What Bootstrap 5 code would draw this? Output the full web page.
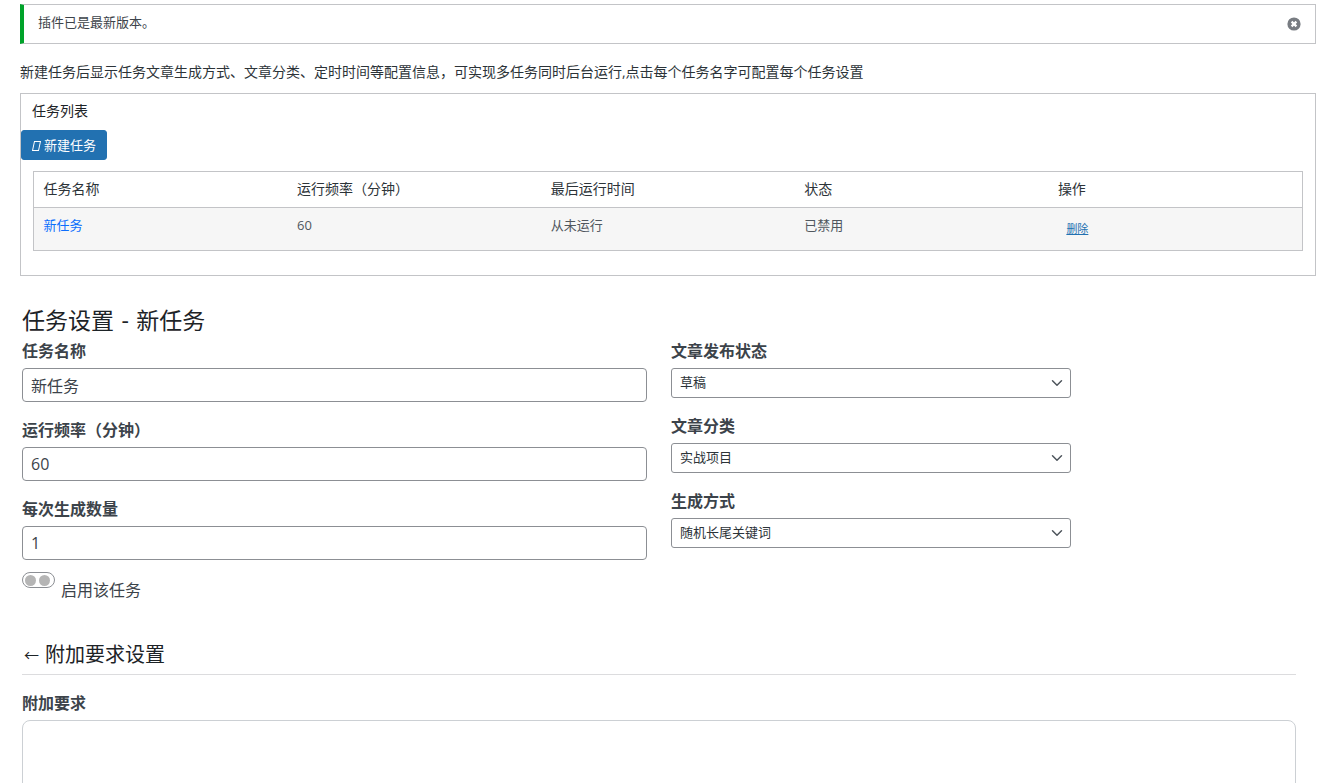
<!doctype html>
<html lang="zh-CN">
<head>
<meta charset="utf-8">
<title>任务设置</title>
<link href="https://cdn.jsdelivr.net/npm/bootstrap@5.3.0/dist/css/bootstrap.min.css" rel="stylesheet">
<style>
html,body{background:#fff;}
body{font-family:"Open Sans","Noto Sans CJK SC",sans-serif;font-size:13px;color:#3c434a;padding:4px 12px 0 20px;overflow:hidden;height:783px;}
.notice-box{height:40px;border:1px solid #c3c4c7;border-left:4px solid #00a32a;border-radius:0;margin:0;padding:0 14px 2px 14px;color:#3c434a;background:#fff;font-size:13px;}
.close-ic{width:14px;height:14px;display:block;margin-top:2px;}
.intro{margin:18px 0 12px;font-size:14px;line-height:19px;color:#2c3338;}
.task-box{height:183px;border:1px solid #c3c4c7;}
.task-title{padding:7px 11px 0;font-size:14px;line-height:20px;color:#1d2327;height:36px;}
.new-btn{--bs-btn-bg:#2271b1;--bs-btn-border-color:#2271b1;--bs-btn-hover-bg:#135e96;font-size:13px;height:30px;padding:0 10px 0 11px;border-radius:3px;line-height:28px;display:block;width:86px;white-space:nowrap;}
.tofu{display:inline-block;width:7px;height:10px;border:1px solid #fff;transform:skewX(-12deg);margin-right:4px;vertical-align:-1px;}
.task-table{margin:11px 12px 0 12px;width:1270px;border:1px solid #c3c4c7;border-collapse:separate;border-spacing:0;table-layout:fixed;}
.task-table th,.task-table td{padding:7px 10px 8px 9.5px;font-weight:400;font-size:14px;line-height:20px;border:0;background:transparent;box-shadow:none;}
.task-table th{height:36px;color:#2c3338;border-bottom:1px solid #c3c4c7;}
.task-table td{height:42px;background:#f6f6f6;color:#50575e;padding-top:7px;vertical-align:top;font-size:13px;}
.task-link{color:#0d6efd;text-decoration:none;}
.del-link{color:#2271b1;font-size:11px;margin-left:8.5px;position:relative;top:3px;}
.settings-title{font-size:23px;font-weight:400;color:#1d2327;margin:28px 0 3px 2px;line-height:32px;word-spacing:1.5px;}
.form-cols{display:flex;margin-left:2px;gap:24px;}
.col-left{width:625px;}
.col-right{width:400px;}
.fld-label{display:block;font-size:16px;font-weight:700;color:#3c434a;line-height:24px;margin:0 0 5px;}
.col-left .fld,.col-right .fld{margin-bottom:16px;}
.txt-input{height:34px;border:1px solid #8c8f94;border-radius:4px;font-size:16px;color:#3c434a;padding:0 8px;box-shadow:none;}
.sel-input{height:30px;border:1px solid #8c8f94;border-radius:3px;font-size:13px;color:#2c3338;padding:0 24px 0 8px;background-image:url("data:image/svg+xml,%3csvg xmlns='http://www.w3.org/2000/svg' viewBox='0 0 16 16'%3e%3cpath fill='none' stroke='%2350575e' stroke-linecap='round' stroke-linejoin='round' stroke-width='2' d='m2 5 6 6 6-6'/%3e%3c/svg%3e");background-position:right 5px center;background-size:16px 12px;}
.toggle-row{display:flex;align-items:flex-start;margin-top:-4px;}
.toggle-pill{width:33px;height:16px;border:1px solid #8c8f94;border-radius:8px;display:flex;align-items:center;gap:3px;padding:0 2px;background:#fff;}
.toggle-pill i{width:11px;height:11px;border-radius:50%;background:#b5b5b5;display:block;}
.toggle-text{font-size:16px;line-height:24px;margin:6px 0 0 6px;color:#3c434a;}
.extra-head{font-size:20px;font-weight:400;color:#1d2327;margin:39px 0 0 2px;line-height:28px;padding-bottom:5px;width:1274px;border-bottom:1px solid #dcdcde;}
.back-arrow{display:inline-block;width:23px;font-size:15px;text-align:center;padding-right:4px;vertical-align:1px;}
.extra-field{margin:16px 0 0 2px;width:1274px;}
.extra-area{height:120px;border:1px solid #ccd0d4;border-radius:8px;margin-top:0;box-shadow:none;}
</style>
</head>
<body>
<div class="alert notice-box d-flex align-items-center justify-content-between" role="alert">
  <span>插件已是最新版本。</span>
  <svg class="close-ic" viewBox="0 0 14 14" aria-hidden="true"><circle cx="7" cy="7" r="6.6" fill="#787c82"/><path d="M4.6 4.6l4.8 4.8M9.4 4.6l-4.8 4.8" stroke="#fff" stroke-width="2.2"/></svg>
</div>
<p class="intro">新建任务后显示任务文章生成方式、文章分类、定时时间等配置信息，可实现多任务同时后台运行,点击每个任务名字可配置每个任务设置</p>
<div class="task-box">
  <div class="task-title">任务列表</div>
  <a class="btn btn-primary new-btn" href="#"><span class="tofu"></span>新建任务</a>
  <table class="table task-table mb-0">
    <thead><tr><th>任务名称</th><th>运行频率（分钟）</th><th>最后运行时间</th><th>状态</th><th>操作</th></tr></thead>
    <tbody><tr><td><a class="task-link" href="#">新任务</a></td><td>60</td><td>从未运行</td><td>已禁用</td><td><a class="del-link" href="#">删除</a></td></tr></tbody>
  </table>
</div>
<h2 class="settings-title">任务设置 - 新任务</h2>
<form class="form-cols">
  <div class="col-left">
    <div class="fld"><label class="fld-label">任务名称</label><input class="form-control txt-input" value="新任务"></div>
    <div class="fld"><label class="fld-label">运行频率（分钟）</label><input class="form-control txt-input" value="60"></div>
    <div class="fld"><label class="fld-label">每次生成数量</label><input class="form-control txt-input" value="1"></div>
    <div class="toggle-row"><span class="toggle-pill"><i></i><i></i></span><span class="toggle-text">启用该任务</span></div>
  </div>
  <div class="col-right">
    <div class="fld"><label class="fld-label">文章发布状态</label><select class="form-select sel-input"><option>草稿</option></select></div>
    <div class="fld"><label class="fld-label">文章分类</label><select class="form-select sel-input"><option>实战项目</option></select></div>
    <div class="fld"><label class="fld-label">生成方式</label><select class="form-select sel-input"><option>随机长尾关键词</option></select></div>
  </div>
</form>
<h3 class="extra-head"><span class="back-arrow">←</span>附加要求设置</h3>
<div class="extra-field"><label class="fld-label">附加要求</label><textarea class="form-control extra-area"></textarea></div>
<script src="https://cdn.jsdelivr.net/npm/bootstrap@5.3.0/dist/js/bootstrap.bundle.min.js"></script>
</body>
</html>
